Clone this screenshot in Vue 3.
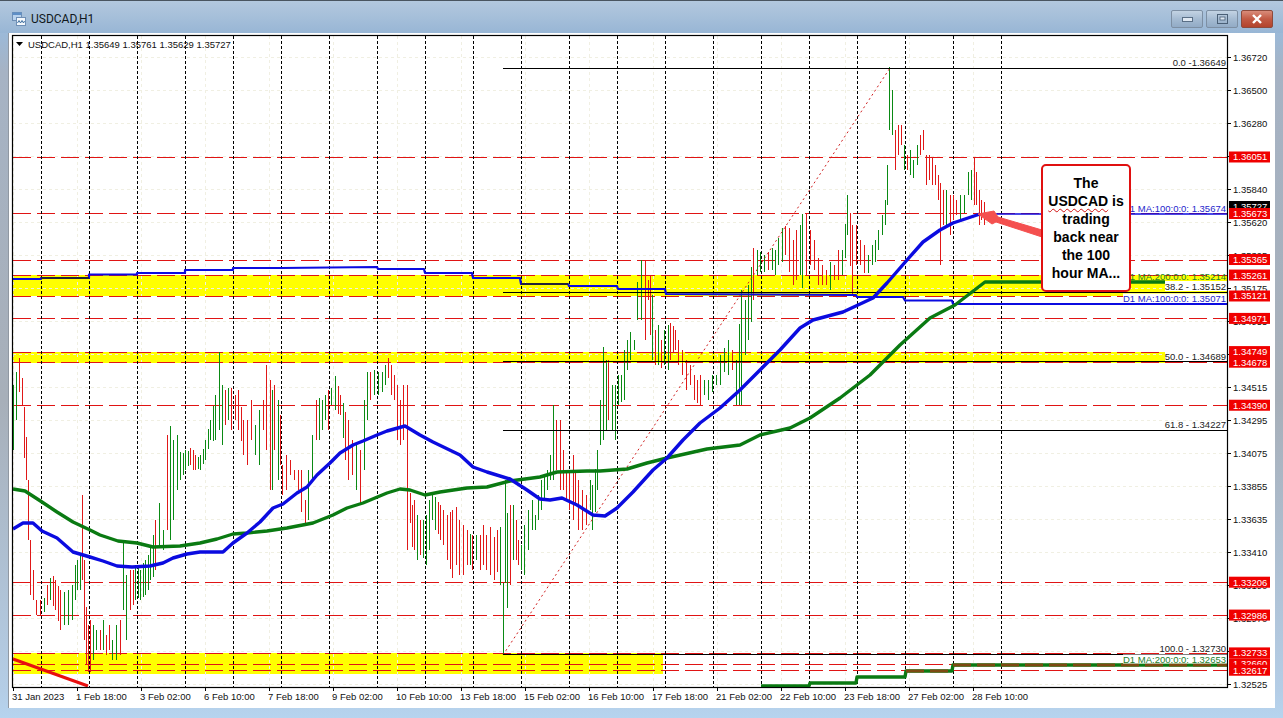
<script setup>
// y position for a price, taken from the axis labels
const priceY = (p) => 57 + (1.3672 - p) * 14946

// these three sit fully behind a price tag, only their tick shows
const coveredLabels = ['1.36060', '1.34735', '1.32750']

const axisLabels = [
  '1.36720', '1.36500', '1.36280', '1.36060', '1.35840', '1.35620', '1.35395', '1.35175', '1.34955', '1.34735',
  '1.34515', '1.34295', '1.34075', '1.33855', '1.33635', '1.33410', '1.33190', '1.32970', '1.32750', '1.32525',
].map((text, i) => ({ text, y: 57 + i * 33, covered: coveredLabels.includes(text) }))

const timeLabels = [
  '31 Jan 2023', '1 Feb 18:00', '3 Feb 02:00', '6 Feb 10:00', '7 Feb 18:00', '9 Feb 02:00', '10 Feb 10:00', '13 Feb 18:00',
  '15 Feb 02:00', '16 Feb 10:00', '17 Feb 18:00', '21 Feb 02:00', '22 Feb 10:00', '23 Feb 18:00', '27 Feb 02:00', '28 Feb 10:00',
].map((text, i) => ({ text, x: 13 + i * 64 }))

const sessionLines = Array.from({ length: 21 }, (_, i) => 41.5 + i * 48)

const levels = [1.36051, 1.35673, 1.35365, 1.35261, 1.35121, 1.34971, 1.34749, 1.34678, 1.3439, 1.33206, 1.32986, 1.32733, 1.3266, 1.32617]
const levelLines = levels.map((p) => Math.round(priceY(p)) + 0.5)
const levelTags = levels.map((p) => ({ text: p.toFixed(5), y: priceY(p) }))

const fibLines = [68.5, 292.5, 361.5, 430.5, 654.5]

const fibLabels = [
  { text: '0.0 -1.36649', y: 62.5 },
  { text: '38.2 - 1.35152', y: 286.5 },
  { text: '50.0 - 1.34689', y: 356 },
  { text: '61.8 - 1.34227', y: 424.5 },
  { text: '100.0 - 1.32730', y: 648 },
]

// the H1 moving averages, read off the chart
const ma100 = '13,529 23,523 33,523 42,531 57,538 73,552 90,557 103,561 117,566 132,567 150,566 163,563 173,558 187,554 200,552 223,552 233,543 247,533 260,522 273,508 283,504 297,493 307,487 317,475 330,463 340,453 353,445 363,441 377,435 387,431 405,426 420,435 433,442 460,455 473,467 487,472 510,479 527,490 540,499 550,500 562,498 577,505 593,515 605,516 617,508 633,492 653,470 667,458 683,440 700,423 720,408 740,390 760,370 780,350 800,328 813,320 843,312 873,298 887,283 907,260 923,242 940,230 953,223 980,214'
const ma200 = '13,489 25,491 42,502 57,512 73,522 90,530 100,535 118,541 137,543 153,547 180,546 200,543 217,539 233,534 247,533 267,531 287,528 313,523 333,515 347,508 363,503 387,493 400,489 410,490 425,495 440,492 467,488 487,487 510,481 540,477 557,472 587,471 600,471 627,469 647,463 667,458 707,449 740,445 760,435 790,428 810,418 840,398 870,375 900,345 930,318 955,305 985,282 1165,282'
const d1Blue = '13,279 41,279 41,278 89,278 89,274.5 137,274.5 137,273 185,273 185,270 233,270 233,268 281,268 377,267 378,269 424,269 425,273 472,273 473,278 520,278 521,284 568,284 569,286 617,286 618,289 665,289 666,294 856,295 857,297 903,297 905,300.5 952,300.5 953,304 1227,304'
const d1Green = '761,686 809,686 810,683 856,683 857,677 905,677 906,671 952,671 953,665 1227,665'

// [x, top of the bars, bottom of the bars]
const knots = [
  [13, 385, 450], [16, 372, 420], [19, 358, 392], [22, 378, 405], [24, 407, 458], [26, 437, 480], [28, 480, 540], [30, 540, 595],
  [33, 570, 600], [36, 600, 615], [40, 600, 615], [44, 598, 612], [47, 585, 605], [50, 578, 600], [55, 580, 610], [60, 590, 630],
  [64, 592, 625], [68, 590, 625], [72, 585, 620], [75, 565, 600], [77, 560, 590], [80, 555, 590], [82, 495, 580], [84, 560, 640],
  [86, 607, 664], [88, 625, 672], [90, 620, 672], [93, 625, 660], [96, 630, 650], [100, 630, 650], [103, 620, 650], [106, 635, 655],
  [109, 625, 650], [112, 640, 660], [116, 625, 660], [120, 620, 655], [123, 543, 610], [126, 575, 640], [130, 570, 610], [135, 565, 600],
  [140, 570, 600], [145, 560, 595], [150, 548, 580], [155, 520, 570], [159, 503, 548], [163, 530, 550], [167, 435, 530], [170, 426, 540],
  [173, 440, 520], [177, 435, 490], [180, 452, 480], [185, 450, 470], [190, 448, 465], [195, 455, 470], [200, 455, 470], [205, 440, 460],
  [210, 420, 440], [215, 395, 440], [219, 352, 430], [222, 385, 445], [225, 390, 425], [228, 388, 420], [231, 388, 430], [235, 395, 420],
  [238, 390, 430], [243, 420, 455], [247, 420, 465], [251, 400, 440], [255, 425, 455], [259, 410, 465], [263, 400, 430], [266, 365, 450],
  [270, 380, 490], [272, 390, 490], [274, 385, 450], [278, 400, 480], [280, 415, 465], [282, 465, 495], [286, 455, 490], [290, 460, 475],
  [294, 470, 480], [298, 470, 490], [301, 470, 512], [305, 500, 525], [308, 470, 520], [312, 435, 480], [316, 400, 440], [319, 398, 440],
  [322, 400, 430], [325, 395, 420], [328, 390, 430], [331, 388, 405], [335, 376, 410], [340, 395, 415], [345, 412, 460], [348, 420, 480],
  [352, 440, 475], [356, 445, 490], [360, 450, 505], [364, 400, 470], [367, 372, 420], [370, 372, 400], [374, 370, 395], [378, 372, 395],
  [382, 372, 392], [385, 365, 385], [388, 358, 378], [391, 365, 395], [394, 375, 400], [397, 385, 440], [400, 400, 445], [403, 385, 440],
  [407, 385, 550], [410, 493, 523], [412, 505, 547], [414, 500, 550], [417, 515, 560], [420, 520, 555], [423, 520, 558], [426, 515, 565],
  [429, 500, 550], [432, 495, 520], [435, 497, 530], [440, 505, 540], [443, 510, 545], [447, 515, 560], [452, 510, 578], [456, 507, 565],
  [459, 520, 575], [463, 525, 575], [467, 530, 565], [472, 535, 570], [476, 535, 560], [480, 535, 570], [483, 525, 565], [486, 535, 570],
  [490, 527, 575], [494, 537, 580], [497, 530, 572], [500, 527, 585], [503, 583, 655], [505, 480, 583], [507, 513, 608], [510, 505, 585],
  [513, 505, 560], [516, 520, 560], [518, 540, 565], [521, 545, 570], [524, 525, 575], [528, 510, 550], [532, 500, 530], [535, 515, 530],
  [538, 495, 520], [541, 480, 510], [544, 475, 500], [547, 470, 490], [550, 455, 480], [553, 405, 480], [556, 420, 470], [560, 420, 490],
  [563, 450, 490], [566, 470, 500], [569, 470, 510], [573, 455, 520], [575, 470, 505], [578, 480, 530], [582, 490, 530], [586, 495, 525],
  [590, 480, 510], [592, 485, 530], [597, 450, 490], [600, 400, 445], [603, 347, 440], [606, 360, 430], [608, 360, 420], [612, 385, 430],
  [615, 385, 440], [618, 375, 405], [621, 375, 402], [624, 350, 400], [627, 340, 370], [630, 332, 360], [634, 340, 350], [637, 282, 320],
  [641, 260, 320], [645, 260, 340], [648, 280, 300], [650, 275, 335], [652, 295, 360], [655, 330, 365], [658, 325, 365], [661, 340, 368],
  [664, 330, 365], [668, 325, 370], [670, 323, 360], [675, 330, 350], [678, 340, 365], [682, 350, 375], [686, 360, 390], [690, 365, 385],
  [694, 375, 400], [697, 380, 403], [700, 375, 405], [704, 380, 395], [708, 380, 400], [712, 375, 392], [716, 375, 385], [720, 355, 385],
  [724, 348, 372], [728, 340, 375], [732, 350, 370], [736, 360, 405], [741, 290, 405], [745, 300, 355], [748, 285, 340], [753, 248, 300],
  [757, 250, 275], [760, 252, 272], [764, 255, 272], [768, 252, 270], [772, 248, 270], [775, 250, 275], [778, 238, 265], [782, 228, 262],
  [785, 226, 255], [789, 228, 272], [793, 240, 285], [796, 230, 280], [800, 225, 275], [802, 214, 288], [806, 214, 275], [810, 230, 265],
  [814, 240, 270], [818, 258, 285], [822, 265, 285], [826, 270, 285], [830, 262, 290], [834, 265, 280], [838, 250, 280], [842, 250, 275],
  [847, 195, 235], [852, 225, 295], [856, 225, 265], [860, 240, 265], [864, 245, 273], [868, 255, 273], [872, 245, 265], [875, 240, 262],
  [878, 230, 250], [882, 215, 235], [885, 200, 225], [887, 165, 205], [889, 67, 130], [892, 90, 135], [895, 130, 170], [898, 125, 155],
  [901, 125, 145], [904, 145, 170], [907, 155, 170], [910, 150, 175], [913, 160, 178], [917, 145, 165], [920, 135, 155], [923, 130, 150],
  [926, 155, 185], [929, 155, 180], [932, 157, 185], [935, 165, 185], [938, 175, 200], [940, 183, 265], [943, 190, 225], [946, 190, 225],
  [950, 195, 235], [953, 195, 220], [956, 200, 215], [960, 195, 220], [964, 195, 213], [968, 172, 195], [971, 170, 200], [974, 157, 205],
  [976, 172, 205], [979, 190, 225], [981, 200, 220], [984, 202, 225],
]

// small seeded generator so the bars come out the same every time
let seed = 4711
const rnd = () => {
  seed = (seed * 16807) % 2147483647
  return seed / 2147483647
}

// every knot is a bar, wider gaps get one filled in between
const bars = []
knots.forEach((k, i) => {
  bars.push(k)
  const next = knots[i + 1]
  if (next && next[0] - k[0] >= 5) {
    bars.push([
      Math.round((k[0] + next[0]) / 2),
      (k[1] + next[1]) / 2 + (rnd() - 0.5) * 6,
      (k[2] + next[2]) / 2 + (rnd() - 0.5) * 6,
    ])
  }
})

const midOf = (b) => (b[1] + b[2]) / 2
let greenBars = ''
let redBars = ''
bars.forEach((b, i) => {
  const before = bars[Math.max(0, i - 2)]
  const after = bars[Math.min(bars.length - 1, i + 2)]
  let up = midOf(after) < midOf(before)
  if (rnd() < 0.08) up = !up
  const seg = `M${b[0] + 0.5} ${Math.round(b[1])}V${Math.round(b[2])}`
  if (up) greenBars += seg
  else redBars += seg
})
</script>

<template>
  <div class="window">
    <header class="titlebar">
      <svg class="win-icon" width="14" height="14" viewBox="0 0 14 14">
        <rect x="0.5" y="0.5" width="9" height="8" fill="#b9d3ee" stroke="#6f8fb5" />
        <rect x="0.5" y="0.5" width="9" height="2.5" fill="#5f8fc6" />
        <rect x="4.5" y="5.5" width="9" height="8" fill="#f4f8fc" stroke="#6f8fb5" />
        <path d="M5.5 11 L7 8.5 L8.5 11 L10 8.5 L11.5 11 L12.5 9" fill="none" stroke="#3f6f9f" />
      </svg>
      <span class="win-title">USDCAD,H1</span>
      <div class="win-buttons">
        <button class="win-btn">
          <svg width="11" height="6" viewBox="0 0 11 6"><rect x="0.5" y="1.5" width="10" height="4" fill="#dfe8f2" stroke="#5a6f86" /></svg>
        </button>
        <button class="win-btn">
          <svg width="11" height="10" viewBox="0 0 11 10"><rect x="0.5" y="0.5" width="10" height="9" fill="none" stroke="#4a5f76" /><rect x="3" y="3" width="5" height="3" fill="#dfe8f2" stroke="#4a5f76" stroke-width="0.8" /></svg>
        </button>
        <button class="win-btn close">
          <svg width="12" height="10" viewBox="0 0 12 10"><path d="M2 1 L10 9 M10 1 L2 9" stroke="#fff" stroke-width="2.4" /></svg>
        </button>
      </div>
    </header>

    <div class="client">
      <svg class="chart" width="1266" height="675" viewBox="9 33 1266 675">
        <!-- highlighted zones -->
        <rect x="13" y="275" width="1214" height="21" fill="#ffff00" />
        <rect x="13" y="352" width="1152" height="11" fill="#ffff00" />
        <rect x="13" y="653" width="650" height="21" fill="#ffff00" />

        <!-- grid -->
        <g class="grid">
          <line v-for="a in axisLabels" :key="a.text" x1="13" x2="1227" :y1="a.y + 0.5" :y2="a.y + 0.5" />
          <line v-for="t in timeLabels" :key="t.text" :x1="t.x + 0.5" :x2="t.x + 0.5" y1="36" y2="687" />
        </g>

        <g class="levels">
          <line v-for="y in levelLines" :key="y" x1="13" x2="1227" :y1="y" :y2="y" />
        </g>
        <g class="sessions">
          <line v-for="x in sessionLines" :key="x" :x1="x" :x2="x" y1="36" y2="687" />
        </g>

        <!-- bars -->
        <path :d="greenBars" class="bars" stroke="#0a8a14" />
        <path :d="redBars" class="bars" stroke="#e01818" />

        <!-- fibonacci -->
        <line class="fib-trend" x1="503" y1="655" x2="890" y2="68" />
        <line v-for="y in fibLines" :key="y" class="fib" x1="503" x2="1227" :y1="y" :y2="y" />

        <!-- moving averages -->
        <polyline :points="d1Blue" class="ma thin" stroke="#0b0be0" />
        <path d="M41 278H89M521 284H568" stroke="#22223a" stroke-width="2.2" />
        <line x1="985" x2="1227" y1="214" y2="214" stroke="#0b0be0" stroke-width="1.6" />
        <polyline :points="d1Green" class="ma" stroke="#0a7a12" />
        <path d="M906 671H952M953 665H1227" stroke="#7d4a12" stroke-width="3" stroke-dasharray="18 6" />
        <polyline :points="ma200" class="ma" stroke="#0a7a12" />
        <polyline :points="ma100" class="ma" stroke="#0b0be0" />

        <!-- trend line, bottom left -->
        <line x1="13" y1="659" x2="88" y2="686" stroke="#e80f0f" stroke-width="3" />

        <!-- object labels -->
        <rect x="1165" y="281" width="62" height="10" fill="#fff" />
        <rect x="1165" y="351" width="62" height="10" fill="#fff" />
        <rect x="1123" y="293.5" width="104" height="9" fill="#fff" />
        <rect x="1123" y="654.5" width="104" height="9" fill="#fff" />
        <g class="obj-label">
          <text v-for="f in fibLabels" :key="f.text" x="1226" :y="f.y">{{ f.text }}</text>
          <text x="1226" y="208" class="blue">D1 MA:100:0:0: 1.35674</text>
          <text x="1226" y="276.5" class="green">D1 MA:200:0:0: 1.35214</text>
          <text x="1226" y="298.5" class="blue">D1 MA:100:0:0: 1.35071</text>
          <text x="1226" y="659.5" class="green">D1 MA:200:0:0: 1.32653</text>
        </g>

        <!-- arrow from the note to the average -->
        <path d="M978 214 L994 211 L998 217 L1042 230 L1042 237 L996 222 L992 224 Z" fill="#f4504f" stroke="#f4504f" stroke-linejoin="round" />

        <!-- frame -->
        <rect x="12.5" y="35.5" width="1215" height="652" class="frame" />

        <!-- heading -->
        <path d="M16 42 H23 L19.5 46 Z" fill="#000" />
        <text x="28" y="44" class="chart-head">USDCAD,H1  1.35649 1.35761 1.35629 1.35727</text>

        <!-- price axis -->
        <g class="axis">
          <template v-for="a in axisLabels" :key="a.text">
            <line x1="1228" x2="1231" :y1="a.y + 0.5" :y2="a.y + 0.5" />
            <text v-if="!a.covered" x="1233" :y="a.y">{{ a.text }}</text>
          </template>
        </g>
        <rect x="1229" y="201" width="41" height="11" fill="#000" />
        <text x="1233" y="206.5" class="tag-text">1.35727</text>
        <g v-for="t in levelTags" :key="t.text">
          <rect x="1229" :y="t.y - 5.5" width="41" height="11" fill="#f00000" />
          <text x="1233" :y="t.y" class="tag-text">{{ t.text }}</text>
        </g>

        <!-- time axis -->
        <g class="axis">
          <template v-for="t in timeLabels" :key="t.text">
            <line :x1="t.x + 0.5" :x2="t.x + 0.5" y1="688" y2="691" />
            <text :x="t.x - 1" y="696.5">{{ t.text }}</text>
          </template>
        </g>
      </svg>

      <div class="note">
        <span>The</span>
        <span><span class="spell">USDCAD</span> is</span>
        <span>trading</span>
        <span>back near</span>
        <span>the 100</span>
        <span>hour MA...</span>
      </div>
    </div>
  </div>
</template>

<style scoped>
.window {
  width: 1283px;
  height: 718px;
  box-sizing: border-box;
  display: flex;
  flex-direction: column;
  overflow: hidden;
  border-top: 1px solid #4a5560;
  background: linear-gradient(180deg, #a9c3dd 0, #9cb9d7 34px, #a6b3c4 70px, #a7afb9 400px, #b4cde6 690px, #b6d4ef 718px);
}

.titlebar {
  height: 32px;
  flex: none;
  display: flex;
  align-items: center;
  padding: 3px 10px 0 12px;
  box-sizing: border-box;
  background: linear-gradient(180deg, #b3c8de, #98b6d5);
}
.win-icon {
  margin-right: 5px;
}
.win-title {
  font: 12px Roboto, "Noto Sans", sans-serif;
  color: #101820;
}
.win-buttons {
  margin-left: auto;
  display: flex;
  gap: 3px;
}
.win-btn {
  width: 32px;
  height: 18px;
  padding: 0;
  display: flex;
  align-items: center;
  justify-content: center;
  border: 1px solid #7d8fa3;
  border-radius: 2px;
  background: linear-gradient(180deg, #c3d3e3, #a5bbd2 50%, #92abc6);
}
.win-btn.close {
  border-color: #8d4a3c;
  background: linear-gradient(180deg, #d98c7a, #c25a44 50%, #b3432c);
}

.client {
  position: relative;
  flex: none;
  height: 675px;
  margin: 0 8px 0 9px;
  background: #fff;
  box-shadow: -1px 0 0 #9098a2;
}
.chart {
  display: block;
}

.grid line {
  stroke: #f0efe2;
  stroke-dasharray: 3 3;
}
.levels line {
  stroke: #e01414;
  stroke-dasharray: 18 6;
}
.sessions line {
  stroke: #000;
  stroke-dasharray: 3 2;
}
.bars {
  fill: none;
  stroke-width: 1;
}
.fib-trend {
  stroke: #d02020;
  stroke-dasharray: 2 3;
}
.fib {
  stroke: #000;
}
.ma {
  fill: none;
  stroke-width: 3.4;
  stroke-linejoin: round;
}
.ma.thin {
  stroke-width: 2.2;
}
.frame {
  fill: none;
  stroke: #000;
  stroke-width: 1.2;
}

text {
  font-family: "Liberation Sans", Arial, sans-serif;
  font-size: 9.5px;
  dominant-baseline: central;
  fill: #111;
}
.chart-head {
  white-space: pre;
}
.obj-label text {
  text-anchor: end;
  fill: #222;
}
.obj-label text.blue {
  fill: #2626cc;
}
.obj-label text.green {
  fill: #1c7f2c;
}
.axis line {
  stroke: #000;
}
.tag-text {
  fill: #fff;
}

.note {
  position: absolute;
  left: 1032px;
  top: 131px;
  width: 90px;
  height: 128px;
  box-sizing: border-box;
  border: 2.5px solid #e01010;
  border-radius: 5px;
  background: #fff;
  display: flex;
  flex-direction: column;
  align-items: center;
  justify-content: center;
  font: bold 14px/18px "Liberation Sans", Arial, sans-serif;
  color: #000;
  white-space: nowrap;
}
.spell {
  text-decoration: underline wavy #d01010 1px;
  text-underline-offset: 2px;
}
</style>

<style>
html,
body {
  margin: 0;
  background: #fff;
}
</style>
